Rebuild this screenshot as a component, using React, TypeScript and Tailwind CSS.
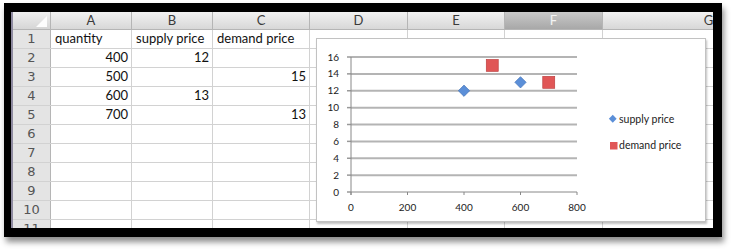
import React from "react";

const cols = [
  { name: "A", w: 81 },
  { name: "B", w: 81 },
  { name: "C", w: 97 },
  { name: "D", w: 98 },
  { name: "E", w: 97 },
  { name: "F", w: 98 },
  { name: "G", w: 212 },
];

const rows: (string | number | null)[][] = [
  ["quantity", "supply price", "demand price"],
  [400, 12, null],
  [500, null, 15],
  [600, 13, null],
  [700, null, 13],
  [],
  [],
  [],
  [],
  [],
  [],
];

const supply = [
  [400, 12],
  [600, 13],
];
const demand = [
  [500, 15],
  [700, 13],
];

// chart coords
const x0 = 34;
const xScale = 226 / 800;
const y0 = 153;
const yScale = 135 / 16;
const px = (v: number) => x0 + v * xScale;
const py = (v: number) => y0 - v * yScale;

function Chart() {
  return (
    <div className="absolute left-[303px] top-[26px] w-[390px] h-[184px] bg-white border border-[#c2c2c2] shadow-[1px_2px_2px_rgba(0,0,0,0.25)]">
      <svg width="390" height="184" className="block" style={{ fontFamily: "Lato, 'Open Sans', sans-serif" }}>
        {[0, 2, 4, 6, 8, 10, 12, 14, 16].map((t) => (
          <g key={t}>
            {t > 0 && <line x1={x0} x2={x0 + 226} y1={py(t)} y2={py(t)} stroke="#b4b4b4" strokeWidth="2" />}
            <line x1={x0 - 4} x2={x0} y1={py(t)} y2={py(t)} stroke="#999" strokeWidth="1.5" />
            <text x={22} y={py(t) + 3.5} fontSize="10" textAnchor="end" fill="#222">
              {t}
            </text>
          </g>
        ))}
        <line x1={x0} x2={x0} y1={py(16)} y2={y0 + 3} stroke="#888" strokeWidth="1" />
        <line x1={x0} x2={x0 + 226} y1={y0} y2={y0} stroke="#888" strokeWidth="1" />
        {[0, 200, 400, 600, 800].map((t) => (
          <g key={t}>
            <line x1={px(t)} x2={px(t)} y1={y0} y2={y0 + 3} stroke="#888" strokeWidth="1" />
            <text x={px(t)} y={172} fontSize="10" textAnchor="middle" fill="#222">
              {t}
            </text>
          </g>
        ))}
        {supply.map(([x, y]) => (
          <rect
            key={x}
            x={px(x) - 4}
            y={py(y) - 4}
            width="8"
            height="8"
            fill="#5b8fd8"
            stroke="#3f6fb5"
            strokeWidth="0.6"
            transform={`rotate(45 ${px(x)} ${py(y)})`}
          />
        ))}
        {demand.map(([x, y]) => (
          <rect
            key={x}
            x={px(x) - 6}
            y={py(y) - 6}
            width="12"
            height="12"
            fill="#e05656"
            stroke="#b83a3a"
            strokeWidth="0.6"
          />
        ))}
        <rect x={293} y={77} width="5.5" height="5.5" fill="#5b8fd8" transform="rotate(45 295.75 79.75)" />
        <text x={302} y={84} fontSize="10.5" fill="#222">
          supply price
        </text>
        <rect x={293} y={103} width="7.5" height="7.5" fill="#e05656" />
        <text x={302} y={110} fontSize="10.5" fill="#222">
          demand price
        </text>
      </svg>
    </div>
  );
}

export default function App() {
  return (
    <div className="w-[735px] h-[250px] bg-white pt-[3px] pl-[4px]" style={{ fontFamily: "Lato, 'Open Sans', sans-serif" }}>
      <div className="w-[718px] h-[234px] bg-black pt-[9px] pl-[7px] pr-[9px] pb-[9px] flex shadow-[2px_5px_6px_rgba(0,0,0,0.45)]">
        <div className="w-[2px] bg-[#8e8aa0]" />
        <div className="relative flex-1 overflow-hidden bg-white">
          {/* column header */}
          <div className="flex h-[18px] border-b border-[#b5b5b5]">
            <div className="w-[38px] shrink-0 bg-gradient-to-b from-[#f0f0f0] to-[#d6d6d6] border-r border-[#b5b5b5] relative">
              <div className="absolute right-[3px] bottom-[2px] w-0 h-0 border-l-[11px] border-l-transparent border-b-[11px] border-b-[#fdfdfd]" />
            </div>
            {cols.map((c) => (
              <div
                key={c.name}
                style={{ width: c.w }}
                className={`shrink-0 flex items-center justify-center text-[13px] border-r border-[#b5b5b5] ${
                  c.name === "F"
                    ? "bg-gradient-to-b from-[#c9c9c9] to-[#a8a8a8] text-[#f4f4f4]"
                    : "bg-gradient-to-b from-[#f2f2f2] to-[#d8d8d8] text-[#3a3a3a]"
                }`}
              >
                {c.name}
              </div>
            ))}
          </div>
          {rows.map((r, i) => (
            <div key={i} className="flex h-[19px] border-b border-[#d2d2d2]">
              <div className="w-[38px] shrink-0 bg-[#e4e4e4] border-r border-[#b5b5b5] flex items-center justify-center text-[13px] text-[#555] font-['DejaVu_Sans',sans-serif] text-[12px]">
                {i + 1}
              </div>
              {cols.map((c, j) => {
                const v = r[j];
                return (
                  <div
                    key={c.name}
                    style={{ width: c.w }}
                    className={`shrink-0 border-r border-[#d2d2d2] flex items-center text-[13px] text-[#111] whitespace-nowrap ${
                      typeof v === "number" ? "justify-end pr-[3px]" : "pl-[4px]"
                    }`}
                  >
                    {v ?? ""}
                  </div>
                );
              })}
            </div>
          ))}
          <Chart />
        </div>
      </div>
    </div>
  );
}
